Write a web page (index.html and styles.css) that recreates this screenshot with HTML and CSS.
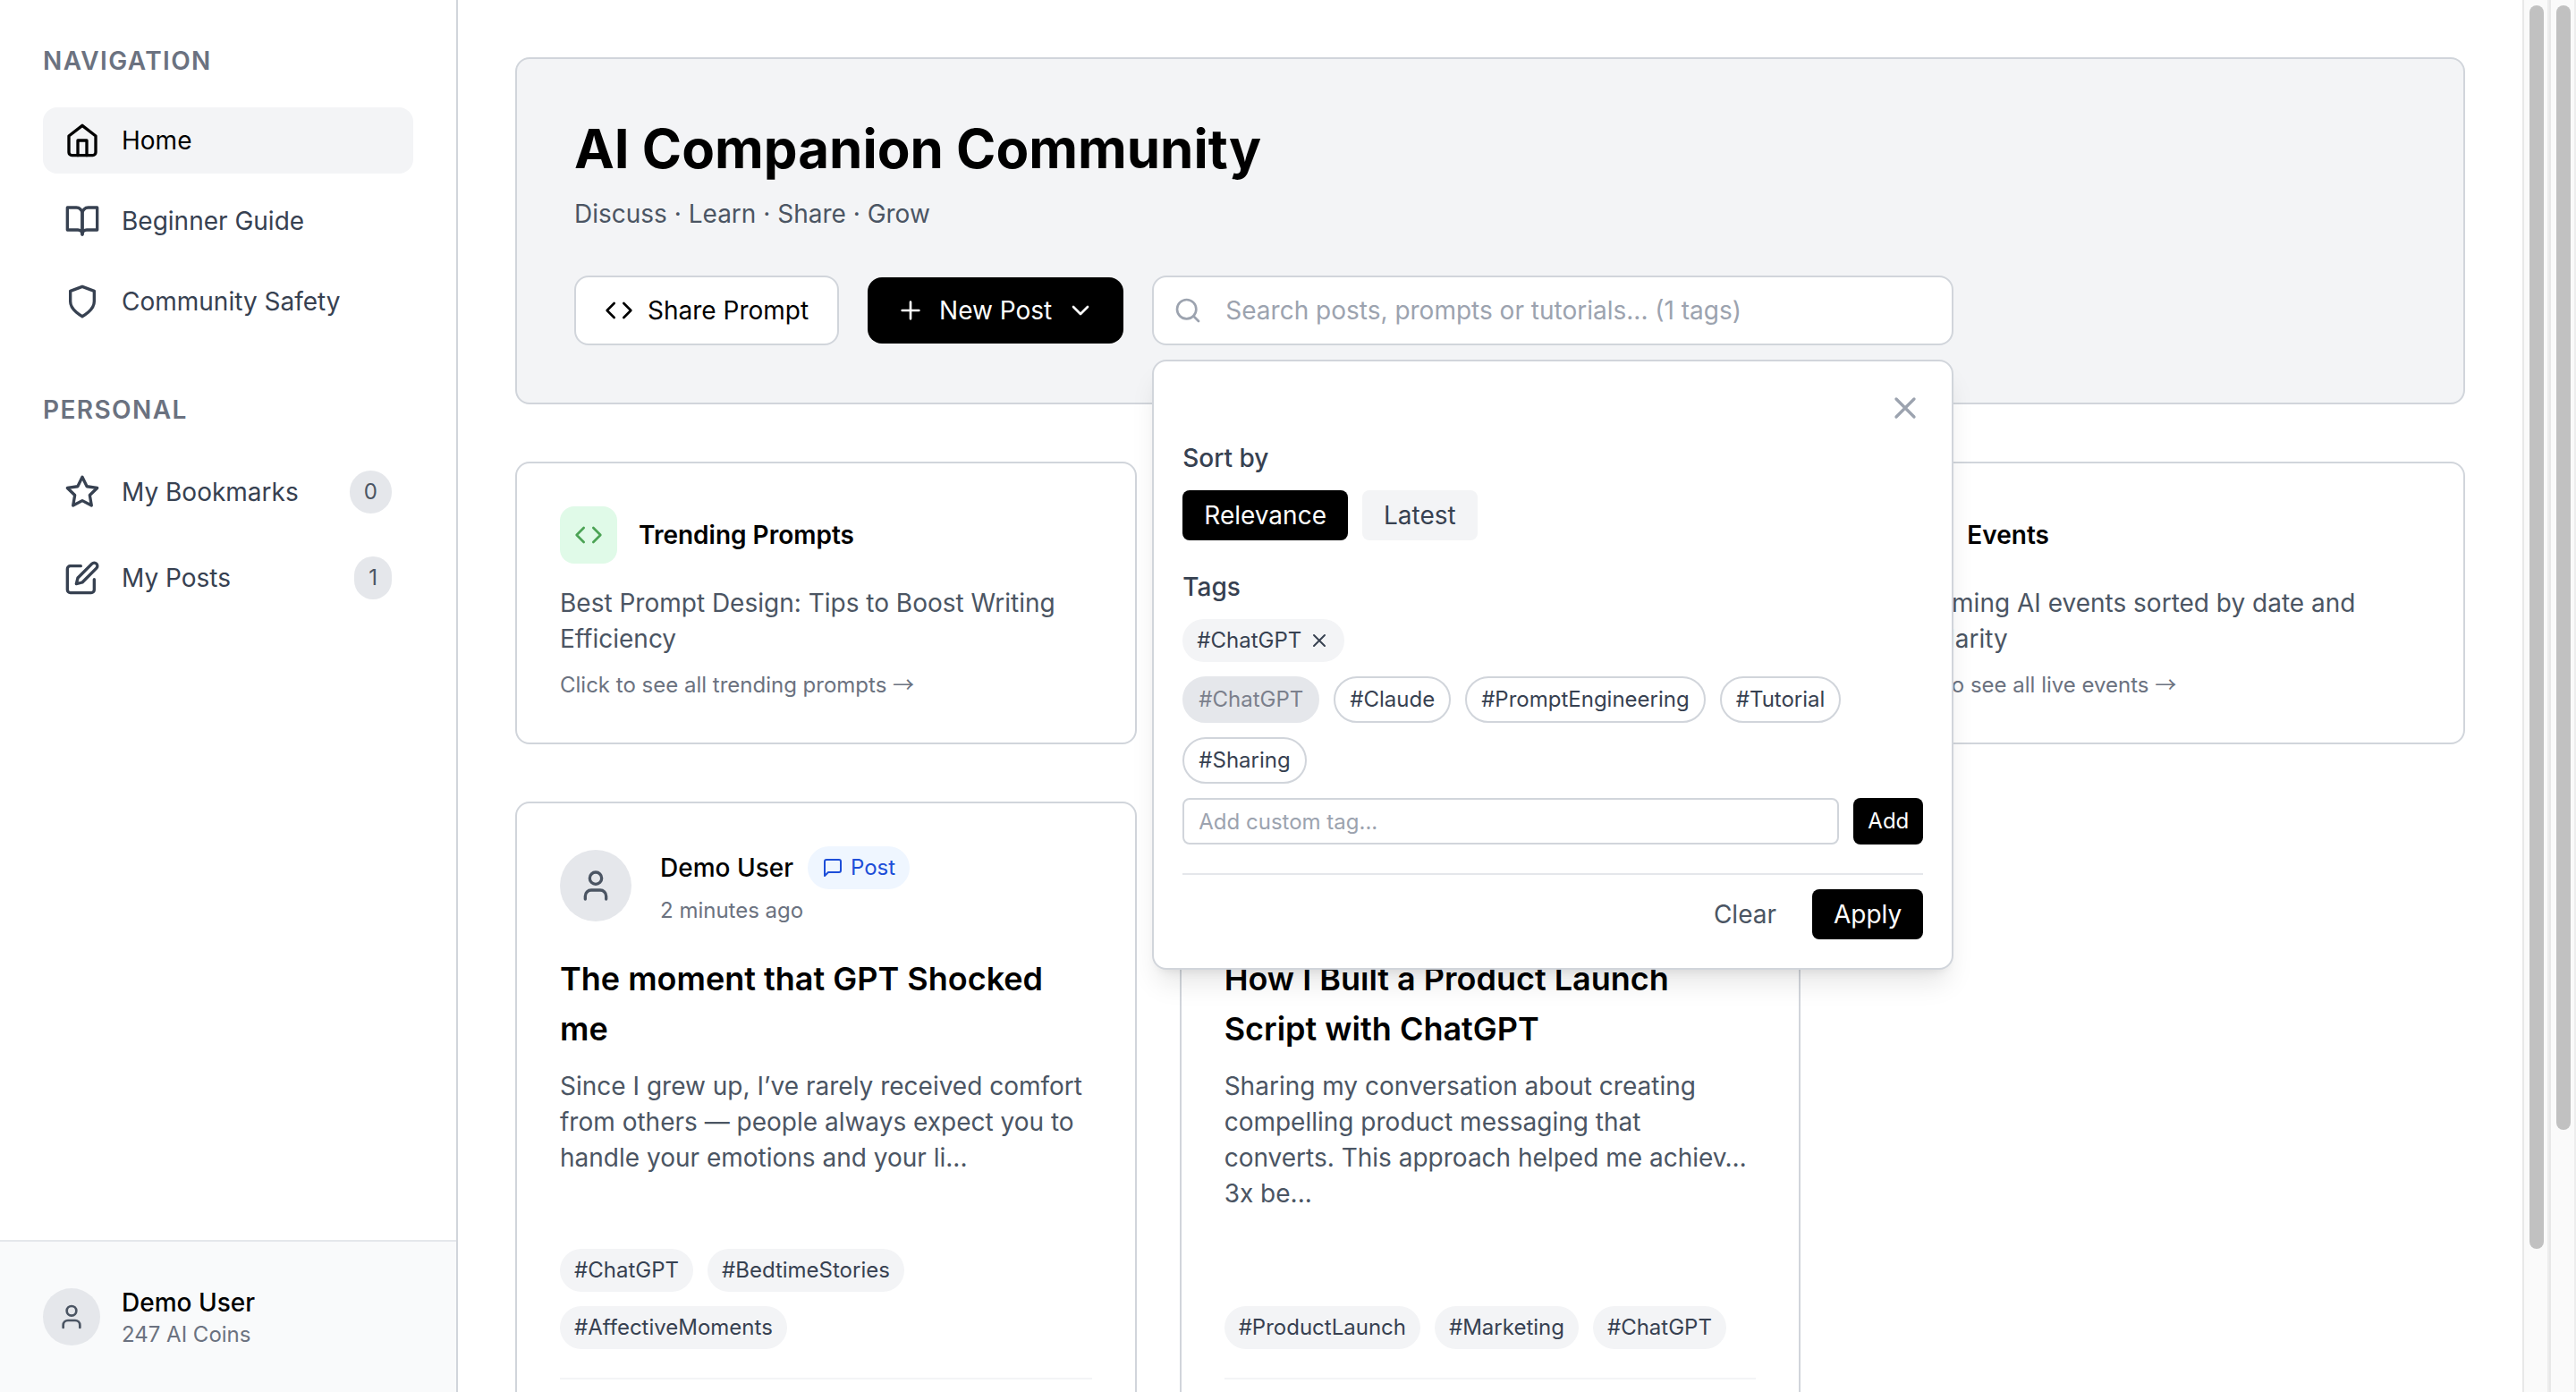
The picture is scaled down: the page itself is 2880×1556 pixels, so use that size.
FILE: index.html
```html
<!DOCTYPE html>
<html lang="en">
<head>
<meta charset="utf-8">
<meta name="viewport" content="width=device-width, initial-scale=1">
<title>AI Companion Community</title>
<link rel="stylesheet" href="styles.css">
</head>
<body>
<svg class="sprite" aria-hidden="true">
  <symbol id="i-home" viewBox="0 0 24 24"><path d="m3 9 9-7 9 7v11a2 2 0 0 1-2 2H5a2 2 0 0 1-2-2z"/><path d="M9 22V12h6v10"/></symbol>
  <symbol id="i-book" viewBox="0 0 24 24"><path d="M2 3h6a4 4 0 0 1 4 4v14a3 3 0 0 0-3-3H2z"/><path d="M22 3h-6a4 4 0 0 0-4 4v14a3 3 0 0 1 3-3h7z"/></symbol>
  <symbol id="i-shield" viewBox="0 0 24 24"><path d="M12 22s8-4 8-10V5l-8-3-8 3v7c0 6 8 10 8 10"/></symbol>
  <symbol id="i-star" viewBox="0 0 24 24"><path d="m12 2 3.09 6.26L22 9.27l-5 4.87 1.18 6.88L12 17.77l-6.18 3.25L7 14.14 2 9.27l6.91-1.01z"/></symbol>
  <symbol id="i-edit" viewBox="0 0 24 24"><path d="M11 4H4a2 2 0 0 0-2 2v14a2 2 0 0 0 2 2h14a2 2 0 0 0 2-2v-7"/><path d="M18.5 2.5a2.12 2.12 0 0 1 3 3L12 15l-4 1 1-4z"/></symbol>
  <symbol id="i-user" viewBox="0 0 24 24"><path d="M19 21v-2a4 4 0 0 0-4-4H9a4 4 0 0 0-4 4v2"/><circle cx="12" cy="7" r="4"/></symbol>
  <symbol id="i-code" viewBox="0 0 24 24"><path d="m16 18 6-6-6-6M8 6l-6 6 6 6"/></symbol>
  <symbol id="i-plus" viewBox="0 0 24 24"><path d="M5 12h14M12 5v14"/></symbol>
  <symbol id="i-chevron" viewBox="0 0 24 24"><path d="m6 9 6 6 6-6"/></symbol>
  <symbol id="i-search" viewBox="0 0 24 24"><circle cx="11" cy="11" r="8"/><path d="m21 21-4.3-4.3"/></symbol>
  <symbol id="i-x" viewBox="0 0 24 24"><path d="M18 6 6 18M6 6l12 12"/></symbol>
  <symbol id="i-message" viewBox="0 0 24 24"><path d="M21 15a2 2 0 0 1-2 2H7l-4 4V5a2 2 0 0 1 2-2h14a2 2 0 0 1 2 2z"/></symbol>
  <symbol id="i-calendar" viewBox="0 0 24 24"><rect x="3" y="4" width="18" height="18" rx="2"/><path d="M16 2v4M8 2v4M3 10h18"/></symbol>
</svg>

<div class="app">
  <aside class="sidebar">
    <nav class="sidebar-nav" aria-label="Main">
      <section class="nav-section">
        <h2 class="nav-heading">NAVIGATION</h2>
        <div class="nav-list">
          <a class="nav-link active" href="#home"><svg class="icon icon-lg"><use href="#i-home"/></svg>Home</a>
          <a class="nav-link" href="#guide"><svg class="icon icon-lg"><use href="#i-book"/></svg>Beginner Guide</a>
          <a class="nav-link" href="#safety"><svg class="icon icon-lg"><use href="#i-shield"/></svg>Community Safety</a>
        </div>
      </section>
      <section class="nav-section">
        <h2 class="nav-heading">PERSONAL</h2>
        <div class="nav-list">
          <a class="nav-link" href="#bookmarks"><svg class="icon icon-lg"><use href="#i-star"/></svg>My Bookmarks<span class="count">0</span></a>
          <a class="nav-link" href="#posts"><svg class="icon icon-lg"><use href="#i-edit"/></svg>My Posts<span class="count">1</span></a>
        </div>
      </section>
    </nav>
    <div class="account">
      <span class="avatar"><svg class="icon"><use href="#i-user"/></svg></span>
      <div>
        <div class="account-name">Demo User</div>
        <div class="account-coins">247 AI Coins</div>
      </div>
    </div>
  </aside>

  <main class="main">
    <header class="hero">
      <h1 class="hero-title">AI Companion Community</h1>
      <p class="hero-subtitle">Discuss · Learn · Share · Grow</p>
      <div class="hero-actions">
        <button class="button button-outline" type="button"><svg class="icon"><use href="#i-code"/></svg>Share Prompt</button>
        <button class="button button-dark" type="button"><svg class="icon"><use href="#i-plus"/></svg>New Post<svg class="icon"><use href="#i-chevron"/></svg></button>
        <div class="search">
          <svg class="icon search-icon"><use href="#i-search"/></svg>
          <input class="search-input" type="text" aria-label="Search" placeholder="Search posts, prompts or tutorials... (1 tags)">
          <div class="filters">
            <button class="filters-close" type="button" aria-label="Close"><svg class="icon icon-lg"><use href="#i-x"/></svg></button>
            <section class="filter-group">
              <h3 class="filter-label">Sort by</h3>
              <div class="row">
                <button class="small-button selected" type="button">Relevance</button>
                <button class="small-button muted" type="button">Latest</button>
              </div>
            </section>
            <section class="filter-group">
              <h3 class="filter-label">Tags</h3>
              <div class="row"><button class="tag" type="button">#ChatGPT<svg class="icon icon-sm"><use href="#i-x"/></svg></button></div>
              <div class="row">
                <button class="tag tag-option" type="button" disabled>#ChatGPT</button>
                <button class="tag tag-option" type="button">#Claude</button>
                <button class="tag tag-option" type="button">#PromptEngineering</button>
                <button class="tag tag-option" type="button">#Tutorial</button>
                <button class="tag tag-option" type="button">#Sharing</button>
              </div>
              <div class="custom-tag">
                <input class="custom-input" type="text" aria-label="Custom tag" placeholder="Add custom tag...">
                <button class="add-button" type="button">Add</button>
              </div>
            </section>
            <div class="filter-actions">
              <button class="small-button plain" type="button">Clear</button>
              <button class="small-button selected" type="button">Apply</button>
            </div>
          </div>
        </div>
      </div>
    </header>

    <section class="grid">
      <a class="card feature" href="#prompts">
        <div class="feature-head"><span class="feature-icon"><svg class="icon"><use href="#i-code"/></svg></span><h2 class="feature-title">Trending Prompts</h2></div>
        <p class="text">Best Prompt Design: Tips to Boost Writing Efficiency</p>
        <p class="hint">Click to see all trending prompts <span class="arrow">→</span></p>
      </a>
      <div class="card feature"></div>
      <a class="card feature" href="#events">
        <div class="feature-head"><span class="feature-icon"><svg class="icon"><use href="#i-calendar"/></svg></span><h2 class="feature-title">Events</h2></div>
        <p class="text">Upcoming AI events sorted by date and popularity</p>
        <p class="hint">Click to see all live events <span class="arrow">→</span></p>
      </a>
    </section>

    <section class="grid">
      <article class="card post">
        <div class="post-head">
          <span class="avatar avatar-lg"><svg class="icon icon-lg"><use href="#i-user"/></svg></span>
          <div class="post-meta">
            <div class="post-author">Demo User<span class="kind"><svg class="icon icon-sm"><use href="#i-message"/></svg>Post</span></div>
            <div class="post-time">2 minutes ago</div>
          </div>
        </div>
        <h2 class="post-title">The moment that GPT Shocked me</h2>
        <p class="text post-body">Since I grew up, I’ve rarely received comfort from others — people always expect you to handle your emotions and your li...</p>
        <div class="row post-tags"><span class="tag">#ChatGPT</span><span class="tag">#BedtimeStories</span><span class="tag">#AffectiveMoments</span></div>
        <div class="post-foot"></div>
      </article>
      <article class="card post">
        <div class="post-head">
          <span class="avatar avatar-lg"><svg class="icon icon-lg"><use href="#i-user"/></svg></span>
        </div>
        <h2 class="post-title">How I Built a Product Launch Script with ChatGPT</h2>
        <p class="text post-body">Sharing my conversation about creating compelling product messaging that converts. This approach helped me achiev… 3x be...</p>
        <div class="row post-tags"><span class="tag">#ProductLaunch</span><span class="tag">#Marketing</span><span class="tag">#ChatGPT</span></div>
        <div class="post-foot"></div>
      </article>
    </section>
  </main>

  <div class="scroll-track" aria-hidden="true"><div class="scroll-thumb thumb-main"></div></div>
  <div class="scroll-track" aria-hidden="true"><div class="scroll-thumb thumb-page"></div></div>
</div>
</body>
</html>
```

FILE: styles.css
```css
* { box-sizing: border-box; }

body, h1, h2, h3, p { margin: 0; }

body {
  background: #fff;
  color: #000;
  font-family: Inter, "Liberation Sans", sans-serif;
  font-size: 28px;
  line-height: 42px;
}

a { color: inherit; text-decoration: none; }

button, input { font: inherit; color: inherit; }

button {
  display: inline-flex;
  align-items: center;
  border: 0;
  background: none;
  padding: 0;
}

.sprite { display: none; }

.icon {
  width: 32px;
  height: 32px;
  flex: none;
  fill: none;
  stroke: currentColor;
  stroke-width: 2;
  stroke-linecap: round;
  stroke-linejoin: round;
}
.icon-lg { width: 40px; height: 40px; }
.icon-sm { width: 24px; height: 24px; }

.app {
  display: flex;
  height: 100vh;
  overflow: hidden;
}

/* Sidebar */
.sidebar {
  display: flex;
  flex: none;
  flex-direction: column;
  width: 512px;
  border-right: 2px solid #d1d5db;
}
.sidebar-nav {
  display: flex;
  flex: 1;
  flex-direction: column;
  gap: 64px;
  padding: 48px;
}
.nav-heading {
  margin-bottom: 32px;
  color: #6b7280;
  font-size: 28px;
  font-weight: 600;
  line-height: 40px;
  letter-spacing: 0.05em;
}
.nav-list { display: flex; flex-direction: column; gap: 16px; }
.nav-link {
  display: flex;
  align-items: center;
  gap: 24px;
  padding: 16px 24px;
  border-radius: 16px;
  color: #374151;
}
.nav-link.active { background: #f3f4f6; color: #000; }
.count {
  margin-left: auto;
  padding: 8px 16px;
  border-radius: 24px;
  background: #e5e7eb;
  color: #4b5563;
  font-size: 24px;
  line-height: 32px;
}
.account {
  display: flex;
  align-items: center;
  gap: 24px;
  padding: 48px;
  border-top: 2px solid #e5e7eb;
  background: #f9fafb;
}
.account-name { font-weight: 500; line-height: 40px; }
.account-coins { color: #6b7280; font-size: 24px; line-height: 32px; }
.avatar {
  display: flex;
  align-items: center;
  justify-content: center;
  flex: none;
  width: 64px;
  height: 64px;
  border-radius: 50%;
  background: #e5e7eb;
  color: #4b5563;
}
.avatar-lg { width: 80px; height: 80px; }

/* Main column */
.main {
  display: flex;
  flex: 1;
  flex-direction: column;
  gap: 64px;
  min-width: 0;
  padding: 64px;
  overflow: hidden;
}
.main > * { flex: none; }
.hero {
  padding: 64px;
  border: 2px solid #d1d5db;
  border-radius: 16px;
  background: #f3f4f6;
}
.hero-title {
  margin-bottom: 16px;
  font-size: 60px;
  font-weight: 700;
  line-height: 72px;
}
.hero-subtitle { margin-bottom: 48px; color: #4b5563; }
.hero-actions { display: flex; align-items: center; gap: 32px; }
.button {
  gap: 16px;
  padding: 16px 32px;
  border-radius: 16px;
}
.button-outline { border: 2px solid #d1d5db; background: #fff; }
.button-dark { background: #000; color: #fff; }

/* Search field and its filter panel */
.search { position: relative; flex: 1; max-width: 896px; }
.search-icon { position: absolute; top: 23px; left: 24px; color: #9ca3af; }
.search-input {
  display: block;
  width: 100%;
  height: 78px;
  padding: 16px 32px 16px 80px;
  border: 2px solid #d1d5db;
  border-radius: 16px;
  background: #fff;
}
.search-input::placeholder, .custom-input::placeholder { color: #9ca3af; opacity: 1; }
.filters {
  position: absolute;
  top: 100%;
  left: 0;
  right: 0;
  z-index: 10;
  display: flex;
  flex-direction: column;
  margin-top: 16px;
  padding: 32px;
  border: 2px solid #d1d5db;
  border-radius: 16px;
  background: #fff;
  box-shadow: 0 20px 30px -6px rgba(0, 0, 0, 0.1), 0 8px 12px -8px rgba(0, 0, 0, 0.1);
}
.filters-close { align-self: flex-end; margin-bottom: 16px; color: #9ca3af; }
.filter-group {
  display: flex;
  flex-direction: column;
  gap: 16px;
  margin-bottom: 32px;
}
.filter-label { color: #374151; font-size: 28px; font-weight: 500; line-height: 40px; }
.row { display: flex; flex-wrap: wrap; gap: 16px; }
.small-button {
  padding: 8px 24px;
  border-radius: 8px;
  line-height: 40px;
}
.selected { background: #000; color: #fff; }
.muted { background: #f3f4f6; color: #374151; }
.plain { color: #4b5563; }
.tag {
  display: inline-flex;
  align-items: center;
  gap: 8px;
  padding: 8px 16px;
  border-radius: 26px;
  background: #f3f4f6;
  color: #374151;
  font-size: 24px;
  line-height: 32px;
}
.tag-option { border: 2px solid #d1d5db; background: #fff; }
.tag-option:disabled { border-color: #e5e7eb; background: #e5e7eb; color: #7b808c; }
.custom-tag { display: flex; gap: 16px; font-size: 24px; line-height: 32px; }
.custom-input {
  flex: 1;
  min-width: 0;
  height: 52px;
  padding: 8px 16px;
  border: 2px solid #d1d5db;
  border-radius: 8px;
}
.add-button { padding: 8px 16px; border-radius: 8px; background: #000; color: #fff; }
.filter-actions {
  display: flex;
  justify-content: flex-end;
  gap: 16px;
  padding-top: 16px;
  border-top: 2px solid #e5e7eb;
}

/* Cards */
.grid { display: grid; grid-template-columns: repeat(3, 1fr); gap: 48px; }
.card {
  display: flex;
  flex-direction: column;
  padding: 48px;
  border: 2px solid #d1d5db;
  border-radius: 16px;
  background: #fff;
}
.feature-head { display: flex; align-items: center; gap: 24px; margin-bottom: 24px; }
.feature-icon {
  display: flex;
  align-items: center;
  justify-content: center;
  width: 64px;
  height: 64px;
  border-radius: 16px;
  background: #e0fae8;
  color: #4ca355;
}
.feature-title { font-size: 28px; font-weight: 600; line-height: 42px; }
.text { color: #4b5563; line-height: 40px; }
.hint { margin-top: 16px; color: #6b7280; font-size: 24px; line-height: 32px; }
.arrow { font-family: "Noto Sans CJK JP", sans-serif; line-height: 0; }

.post-head {
  display: flex;
  align-items: center;
  gap: 32px;
  min-height: 88px;
  margin-bottom: 32px;
}
.post-meta { display: flex; flex-direction: column; gap: 8px; }
.post-author { display: flex; align-items: center; gap: 16px; font-weight: 500; }
.kind {
  display: inline-flex;
  align-items: center;
  gap: 8px;
  padding: 8px 16px;
  border-radius: 24px;
  background: #eff6ff;
  color: #1d4ed8;
  font-size: 24px;
  font-weight: 400;
  line-height: 32px;
}
.post-time { color: #6b7280; font-size: 24px; line-height: 32px; }
.post-title { margin-bottom: 16px; font-size: 36px; font-weight: 600; line-height: 56px; }
.post-body { flex: 1 0 auto; min-height: 170px; margin-bottom: 32px; }
.post-foot { min-height: 72px; margin-top: 32px; border-top: 2px solid #f3f4f6; }

/* Scroll bars */
.scroll-track {
  flex: none;
  width: 30px;
  padding: 6px 4px 6px 6px;
  border-right: 2px solid #ededed;
  border-left: 2px solid #e8e8e8;
  background: #fafafa;
}
.scroll-thumb { width: 16px; border-radius: 8px; background: #c1c1c1; }
.thumb-main { height: 90%; }
.thumb-page { height: 81.4%; }
```
